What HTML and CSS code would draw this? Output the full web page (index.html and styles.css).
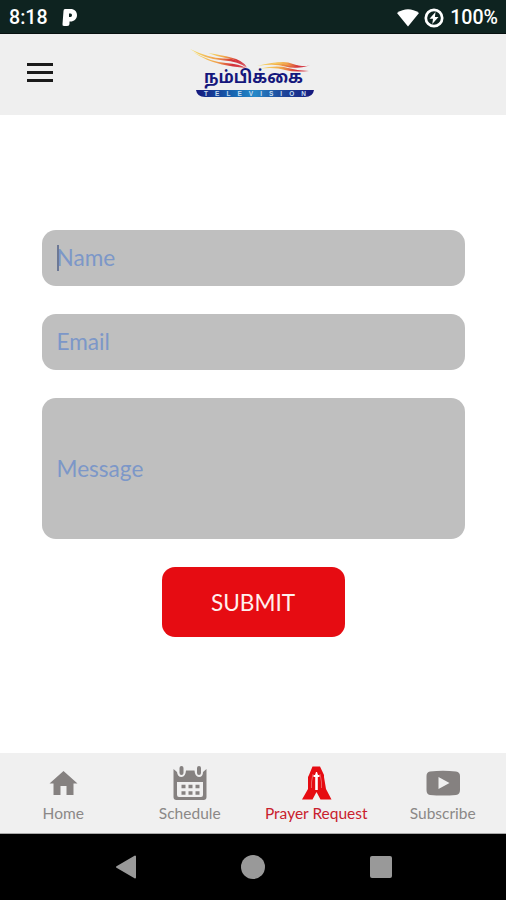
FILE: index.html
```
<!DOCTYPE html>
<html lang="en">
<head>
    <meta charset="UTF-8">
    <meta name="viewport" content="width=device-width, initial-scale=1.0">
    <title>Prayer Request</title>
    <link rel="stylesheet" href="styles.css">
</head>
<body>
    <div id="statusbar">
        <span class="clock">8:18</span>
        <svg class="pandora" width="16" height="20" viewBox="0 0 16 20">
            <path fill="#fff" fill-rule="evenodd" d="M3 1H8.500C12.500 1 15 3.500 15 7.200S12 13.500 8.500 13.500H7.500V15.500Q7.500 18 5 18H2Q0 18 0.500 16L1.500 3Q1.500 1 3 1ZM7 5.500V9H8.500Q10 9 10 7.200T8.500 5.500Z"/>
        </svg>
        <div class="status-right">
            <svg width="22" height="18" viewBox="0 0 22 18">
                <path fill="#fff" d="M0 4Q11-3.500 22 4L11 17.500Z"/>
            </svg>
            <svg width="20" height="20" viewBox="0 0 20 20">
                <circle cx="10" cy="10" r="8.200" fill="none" stroke="#fff" stroke-width="2.700"/>
                <path fill="#fff" d="M11.500 4L5.500 10.800H9L8.300 16L14.500 9H10.900Z"/>
            </svg>
            <span class="battery">100%</span>
        </div>
    </div>

    <div id="header">
        <div id="menu">
            <div></div>
            <div></div>
            <div></div>
        </div>
        <svg id="logo" width="145" height="65" viewBox="0 0 145 65">
            <defs>
                <linearGradient id="flame">
                    <stop offset="0" stop-color="#f7e36a"/>
                    <stop offset="0.45" stop-color="#f0a04a"/>
                    <stop offset="0.75" stop-color="#d3303a"/>
                    <stop offset="1" stop-color="#d8505a"/>
                </linearGradient>
                <linearGradient id="band">
                    <stop offset="0" stop-color="#15177c"/>
                    <stop offset="0.3" stop-color="#1762ae"/>
                    <stop offset="0.5" stop-color="#2589c8"/>
                    <stop offset="0.7" stop-color="#1f4e9f"/>
                    <stop offset="1" stop-color="#15177c"/>
                </linearGradient>
            </defs>
            <g fill="url(#flame)">
                <path d="M10 9Q29 18 43 18.500Q60 18 67 28Q58 21 44 20.500Q25 19.500 10 9Z"/>
                <path d="M13 12Q31 22 46 23Q60 24 66 28Q52 26.500 42 24.500Q26 21 13 12Z"/>
                <path d="M28 13Q42 15 51 17.500Q62 20 67 27Q58 20 48 18.500Q38 17 28 13Z"/>
                <path d="M77 26Q98 20 108 24Q119 27 130 25.500Q116 29.500 105 26.500Q95 23.500 77 26Z"/>
                <path d="M80 28.500Q97 25 108 28Q119 31 129 31Q115 32.500 105 30Q96 27 80 28.500Z"/>
                <path d="M91 24Q104 20 113 24Q121 27 127 26Q117 28.500 109 26Q102 23 91 24Z"/>
            </g>
            <text class="logo-name" transform="translate(24 42.500) scale(1 0.82)" textLength="99" lengthAdjust="spacingAndGlyphs">நம்பிக்கை</text>
            <path fill="url(#band)" d="M16 50H134Q133 57 125 57H25Q17 57 16 50Z"/>
            <text class="logo-sub" x="24" y="55.800" textLength="102">TELEVISION</text>
        </svg>
    </div>

    <form id="prayer">
        <div class="field">
            <input class="box" type="text" placeholder="Name">
            <span class="caret"></span>
        </div>
        <input class="box" type="text" placeholder="Email">
        <input class="box message" type="text" placeholder="Message">
        <button id="submit" type="button">SUBMIT</button>
    </form>

    <div id="tabs">
        <div class="tab">
            <svg width="34" height="36" viewBox="0 0 34 36">
                <path fill="#858180" d="M17.500 6L31.500 18.500H27.500V30H20.500V21H14.500V30H7.500V18.500H3.500Z"/>
            </svg>
            <p>Home</p>
        </div>
        <div class="tab">
            <svg width="34" height="36" viewBox="0 0 34 36">
                <path fill="#858180" fill-rule="evenodd" d="M0.500 4L4 7Q4.500 12 8.500 12T13 5.500H21.500Q22 12 26 12T30 7L33.500 4V32Q33.500 35 30.500 35H3.500Q0.500 35 0.500 32ZM4 17V30Q4 32 6 32H28Q30 32 30 30V17Z"/>
                <path stroke="#858180" stroke-width="4" stroke-linecap="round" d="M8.500 3V8M26 3V8"/>
                <path stroke="#858180" stroke-width="3.500" stroke-dasharray="4 3" d="M8.500 21.500H27M8.500 28H27"/>
            </svg>
            <p>Schedule</p>
        </div>
        <div class="tab active">
            <svg width="34" height="36" viewBox="0 0 34 36">
                <path fill="#e60c12" d="M13.500 1.500H21L25 10V12L27 24L32.500 34.500H21.500L17.500 27L13.500 34.500H3L9 24V12L10 10Z"/>
                <path fill="none" stroke="#ee7575" stroke-width="0.800" d="M14 9L12.500 17V23M21 9L22.500 17V23"/>
                <path fill="#fff" d="M17 7H18L19 10H20.500V12H18.800V25H16.200V12H14.500V10H16Z"/>
            </svg>
            <p>Prayer Request</p>
        </div>
        <div class="tab">
            <svg width="34" height="36" viewBox="0 0 34 36">
                <path fill="#858180" fill-rule="evenodd" d="M4 6.500Q17 5 30 6.500Q34 7 34 11V25Q34 29.500 30 30Q17 31 4 30Q0.500 29.500 0.500 25V11Q0.500 7 4 6.500ZM12.500 12V24L23.500 18Z"/>
            </svg>
            <p>Subscribe</p>
        </div>
    </div>

    <div id="navbar">
        <svg width="22" height="24" viewBox="0 0 22 24">
            <path fill="#999" stroke="#999" stroke-width="2" stroke-linejoin="round" d="M20 1.500V22.500L2 12Z"/>
        </svg>
        <div class="nav-home"></div>
        <div class="nav-recent"></div>
    </div>
</body>
</html>
```
FILE: styles.css
```
*{
    box-sizing: border-box;
}
body{
    display: flex;
    flex-direction: column;
    width: 506px;
    height: 900px;
    margin: 0;
    overflow: hidden;
    background-color: white;
    font-family: Lato, sans-serif;
}
svg{
    display: block;
    flex: none;
}
#statusbar{
    display: flex;
    align-items: center;
    height: 34px;
    padding: 2px 8px 0px 9px;
    background-color: #0e2320;
    border-bottom: 1px solid #06100f;
    color: white;
    font-family: Roboto, sans-serif;
    font-size: 19.6px;
    font-weight: 500;
}
.pandora{
    margin-left: 14px;
}
.status-right{
    display: flex;
    align-items: center;
    gap: 5px;
    margin-left: auto;
}
.battery{
    margin-left: 1px;
}
#header{
    display: flex;
    height: 81px;
    padding: 6px 0px 0px 27px;
    background-color: #efefef;
}
#menu{
    display: flex;
    flex-direction: column;
    gap: 5px;
    width: 26px;
    margin-top: 23px;
}
#menu div{
    height: 3px;
    background-color: #1a1a1a;
}
#logo{
    margin-left: 127px;
    overflow: visible;
}
.logo-name{
    font-family: "Noto Sans Tamil", "Noto Sans", sans-serif;
    font-size: 21px;
    font-weight: bold;
    fill: #15177c;
}
.logo-sub{
    font-family: "Liberation Sans", sans-serif;
    font-size: 6.5px;
    font-weight: bold;
    fill: #c5dcf0;
}
#prayer{
    display: flex;
    flex-direction: column;
    align-items: center;
    gap: 28px;
    height: 638px;
    padding-top: 115px;
}
.field{
    position: relative;
}
.box{
    display: block;
    width: 423px;
    height: 56px;
    padding: 0px 15px 1px;
    border: none;
    border-radius: 14px;
    outline: none;
    background-color: #bfbfbf;
    font-family: Lato, sans-serif;
    font-size: 22.6px;
}
.box::placeholder{
    color: #7c97c8;
    opacity: 1;
}
.message{
    height: 141px;
}
.caret{
    position: absolute;
    left: 15px;
    top: 15px;
    width: 2px;
    height: 26px;
    background-color: #6c7895;
}
#submit{
    width: 183px;
    height: 70px;
    border: none;
    border-radius: 13px;
    background-color: #e60c12;
    color: #fff0ee;
    font-family: Lato, sans-serif;
    font-size: 22.6px;
}
#tabs{
    display: grid;
    grid-template-columns: repeat(4, 1fr);
    height: 81px;
    padding-top: 12px;
    background-color: #f0f0f0;
    border-bottom: 1px solid #aaa;
}
.tab{
    display: flex;
    flex-direction: column;
    align-items: center;
    color: #8b8887;
}
.tab p{
    margin: 2px 0px 0px;
    font-size: 15.5px;
    line-height: 20px;
    white-space: nowrap;
}
.active{
    color: #c9202d;
}
#navbar{
    display: flex;
    justify-content: center;
    align-items: center;
    flex: 1;
    gap: 104.5px;
    background-color: black;
}
.nav-home{
    width: 24px;
    height: 24px;
    border-radius: 50%;
    background-color: #999;
}
.nav-recent{
    width: 22px;
    height: 22px;
    border-radius: 2px;
    background-color: #999;
}
```
